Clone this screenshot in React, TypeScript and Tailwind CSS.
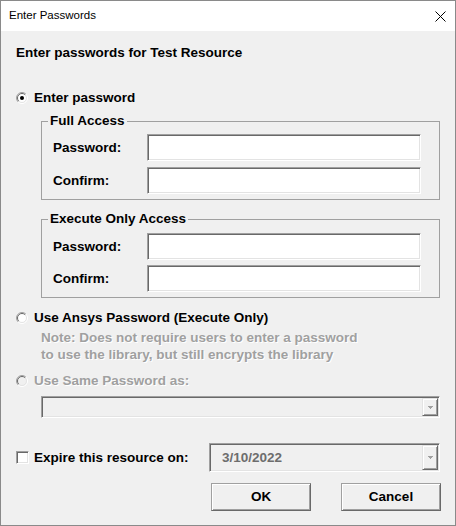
import React from "react";

function Radio({ checked = false, disabled = false }: { checked?: boolean; disabled?: boolean }) {
  return (
    <svg width="12" height="12" viewBox="0 0 12 12" className="shrink-0">
      <circle cx="6" cy="6" r="5" fill={disabled ? "#f0f0f0" : "#ffffff"} />
      <path d="M2.1 9.9 A5.5 5.5 0 0 1 9.9 2.1" stroke="#a0a0a0" strokeWidth="1" fill="none" />
      <path d="M9.9 2.1 A5.5 5.5 0 0 1 2.1 9.9" stroke="#ffffff" strokeWidth="1" fill="none" />
      <path d="M2.8 9.2 A4.5 4.5 0 0 1 9.2 2.8" stroke="#696969" strokeWidth="1" fill="none" />
      <path d="M9.2 2.8 A4.5 4.5 0 0 1 2.8 9.2" stroke="#e3e3e3" strokeWidth="1" fill="none" />
      {checked && <circle cx="6" cy="6" r="2" fill="#000000" />}
    </svg>
  );
}

function Arrow() {
  return (
    <div className="h-full w-[16px] bg-[#f0f0f0] border border-t-[#e3e3e3] border-l-[#e3e3e3] border-r-[#696969] border-b-[#696969] shadow-[inset_1px_1px_0_#ffffff,inset_-1px_-1px_0_#a0a0a0] flex items-center justify-center">
      <svg width="5" height="3" viewBox="0 0 5 3" shapeRendering="crispEdges">
        <rect x="0" y="0" width="5" height="1" fill="#a0a0a0" />
        <rect x="1" y="1" width="3" height="1" fill="#a0a0a0" />
        <rect x="2" y="2" width="1" height="1" fill="#a0a0a0" />
      </svg>
    </div>
  );
}

function Field({ label }: { label: string }) {
  return (
    <div className="flex items-center">
      <div className="w-[94px]">{label}</div>
      <div className="h-[27px] w-[274px] bg-white border border-t-[#a0a0a0] border-l-[#a0a0a0] border-r-white border-b-white shadow-[inset_1px_1px_0_#696969,inset_-1px_-1px_0_#e3e3e3]" />
    </div>
  );
}

export default function App() {
  return (
    <div className="w-[456px] h-[526px] border border-[#8a8a8a] flex flex-col bg-[#f0f0f0] [font-family:'Liberation_Sans',Arial,sans-serif] overflow-hidden">
      <div className="h-[30px] bg-white flex items-center justify-between pl-[8px] pr-[9px] shrink-0">
        <span className="text-[11.5px] text-black font-normal">Enter Passwords</span>
        <svg width="11" height="11" viewBox="0 0 11 11">
          <path d="M0.5 0.5 L10.5 10.5 M10.5 0.5 L0.5 10.5" stroke="#000" strokeWidth="1" />
        </svg>
      </div>

      <div className="flex-1 flex flex-col pl-[15px] pr-[15px] pt-[14px] text-[13.5px] leading-[16px] font-bold text-black">
        <div>Enter passwords for Test Resource</div>

        <div className="mt-[29px] flex items-center gap-[6px]">
          <Radio checked />
          <span>Enter password</span>
        </div>

        <fieldset className="ml-[25px] mt-[7px] w-[399px] border border-[#a0a0a0] pl-[11px] pr-[18px] pt-[5px] pb-[5px]">
          <legend className="-ml-[5px] px-[2px] leading-[16px]">Full Access</legend>
          <div className="flex flex-col gap-[6px]">
            <Field label="Password:" />
            <Field label="Confirm:" />
          </div>
        </fieldset>

        <fieldset className="ml-[25px] mt-[11px] w-[399px] border border-[#a0a0a0] pl-[11px] pr-[18px] pt-[6px] pb-[5px]">
          <legend className="-ml-[5px] px-[2px] leading-[16px]">Execute Only Access</legend>
          <div className="flex flex-col gap-[5px]">
            <Field label="Password:" />
            <Field label="Confirm:" />
          </div>
        </fieldset>

        <div className="mt-[12px] flex items-center gap-[6px]">
          <Radio />
          <span>Use Ansys Password (Execute Only)</span>
        </div>

        <div className="mt-[3px] ml-[25px] leading-[17px] text-[#a0a0a0] [text-shadow:1px_1px_0_#ffffff]">
          <div>Note: Does not require users to enter a password</div>
          <div>to use the library, but still encrypts the library</div>
        </div>

        <div className="mt-[10px] flex items-center gap-[6px]">
          <Radio disabled />
          <span className="text-[#a0a0a0] [text-shadow:1px_1px_0_#ffffff]">Use Same Password as:</span>
        </div>

        <div className="ml-[25px] mt-[7px] h-[22px] w-[399px] bg-[#f0f0f0] border border-t-[#a0a0a0] border-l-[#a0a0a0] border-r-white border-b-white shadow-[inset_1px_1px_0_#696969,inset_-1px_-1px_0_#e3e3e3] flex justify-end p-[1px]">
          <Arrow />
        </div>

        <div className="mt-[25px] flex items-center">
          <div className="h-[13px] w-[13px] bg-white border border-t-[#a0a0a0] border-l-[#a0a0a0] border-r-white border-b-white shadow-[inset_1px_1px_0_#696969,inset_-1px_-1px_0_#e3e3e3] shrink-0" />
          <span className="ml-[5px]">Expire this resource on:</span>
          <div className="ml-auto h-[29px] w-[231px] bg-[#f0f0f0] border border-t-[#a0a0a0] border-l-[#a0a0a0] border-r-white border-b-white shadow-[inset_1px_1px_0_#696969,inset_-1px_-1px_0_#e3e3e3] flex items-stretch p-[1px]">
            <div className="flex-1 flex items-center pl-[11px] text-[#6d6d6d]">3/10/2022</div>
            <Arrow />
          </div>
        </div>

        <div className="mt-[11px] flex justify-end gap-[30px] -mr-[1px]">
          <button className="w-[100px] h-[28px] bg-[#f0f0f0] border border-t-[#a0a0a0] border-l-[#a0a0a0] border-r-[#696969] border-b-[#696969] shadow-[inset_1px_1px_0_#ffffff,inset_-1px_-1px_0_#a0a0a0] font-bold text-black">
            OK
          </button>
          <button className="w-[100px] h-[28px] bg-[#f0f0f0] border border-t-[#a0a0a0] border-l-[#a0a0a0] border-r-[#696969] border-b-[#696969] shadow-[inset_1px_1px_0_#ffffff,inset_-1px_-1px_0_#a0a0a0] font-bold text-black">
            Cancel
          </button>
        </div>
      </div>
    </div>
  );
}
